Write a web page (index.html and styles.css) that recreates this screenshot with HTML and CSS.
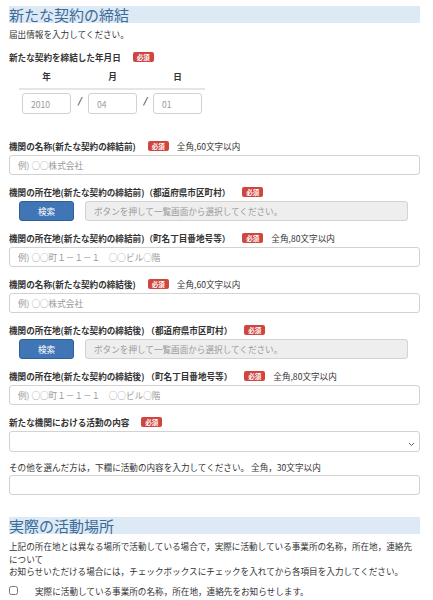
FILE: index.html
```html
<!DOCTYPE html>
<html lang="ja">
<head>
<meta charset="utf-8">
<title>新たな契約の締結</title>
<link rel="stylesheet" href="styles.css">
</head>
<body>
<div class="page">
  <h2 class="sec-title">新たな契約の締結</h2>
  <p class="lead">届出情報を入力してください。</p>

  <div class="field first">
    <div class="label-row"><span class="label">新たな契約を締結した年月日</span><span class="badge">必須</span></div>
    <div class="date">
      <div class="date-head"><span>年</span><span></span><span>月</span><span></span><span>日</span></div>
      <div class="date-inputs">
        <input class="input" type="text" placeholder="2010">
        <span class="slash">/</span>
        <input class="input" type="text" placeholder="04">
        <span class="slash">/</span>
        <input class="input" type="text" placeholder="01">
      </div>
    </div>
  </div>

  <div class="field after-date">
    <div class="label-row"><span class="label">機関の名称(新たな契約の締結前)</span><span class="badge">必須</span><span class="note">全角,60文字以内</span></div>
    <input class="input full" type="text" placeholder="例) ○○株式会社">
  </div>

  <div class="field">
    <div class="label-row"><span class="label">機関の所在地(新たな契約の締結前)（都道府県市区町村）</span><span class="badge">必須</span></div>
    <div class="search-row">
      <button class="btn-search" type="button">検索</button>
      <input class="input readonly" type="text" readonly placeholder="ボタンを押して一覧画面から選択してください。">
    </div>
  </div>

  <div class="field">
    <div class="label-row"><span class="label">機関の所在地(新たな契約の締結前)（町名丁目番地号等）</span><span class="badge">必須</span><span class="note">全角,80文字以内</span></div>
    <input class="input full" type="text" placeholder="例) ○○町１－１－１　○○ビル○階">
  </div>

  <div class="field">
    <div class="label-row"><span class="label">機関の名称(新たな契約の締結後)</span><span class="badge">必須</span><span class="note">全角,60文字以内</span></div>
    <input class="input full" type="text" placeholder="例) ○○株式会社">
  </div>

  <div class="field">
    <div class="label-row"><span class="label">機関の所在地(新たな契約の締結後) （都道府県市区町村）</span><span class="badge">必須</span></div>
    <div class="search-row">
      <button class="btn-search" type="button">検索</button>
      <input class="input readonly" type="text" readonly placeholder="ボタンを押して一覧画面から選択してください。">
    </div>
  </div>

  <div class="field">
    <div class="label-row"><span class="label">機関の所在地(新たな契約の締結後) （町名丁目番地号等）</span><span class="badge">必須</span><span class="note">全角,80文字以内</span></div>
    <input class="input full" type="text" placeholder="例) ○○町１－１－１　○○ビル○階">
  </div>

  <div class="field">
    <div class="label-row"><span class="label">新たな機関における活動の内容</span><span class="badge">必須</span></div>
    <div class="select-wrap">
      <select class="input full select"><option></option></select>
      <svg class="chev" width="7" height="5" viewBox="0 0 7 5"><path d="M1 1 L3.5 3.5 L6 1" fill="none" stroke="#666" stroke-width="1"/></svg>
    </div>
  </div>

  <div class="field other">
    <div class="label-row"><span class="plain">その他を選んだ方は，下欄に活動の内容を入力してください。 全角，30文字以内</span></div>
    <input class="input full" type="text">
  </div>

  <h2 class="sec-title second">実際の活動場所</h2>
  <p class="para">上記の所在地とは異なる場所で活動している場合で，実際に活動している事業所の名称，所在地，連絡先<br>について<br>お知らせいただける場合には，チェックボックスにチェックを入れてから各項目を入力してください。</p>
  <label class="check-row"><input type="checkbox" class="check"><span>実際に活動している事業所の名称，所在地，連絡先をお知らせします。</span></label>
</div>
</body>
</html>
```

FILE: styles.css
```css
* { box-sizing: border-box; }
html, body { margin: 0; padding: 0; background: #fff; }
body {
  font-family: "Noto Sans CJK JP", "Noto Sans", sans-serif;
  font-size: 8.6px;
  color: #333;
  line-height: 12px;
}
.page {
  margin-left: 9px;
  width: 411px;
  padding-top: 6px;
}
.sec-title {
  margin: 0;
  height: 17px;
  line-height: 17px;
  background: #dde9f5;
  color: #3b6c98;
  font-size: 15px;
  font-weight: normal;
  padding-left: 0;
  white-space: nowrap;
}
.lead {
  margin: 5px 0 0;
}
.field { margin-top: 11px; }
.field.after-date { margin-top: 26px; }
.field.other { margin-top: 9px; }
.field.other .full { margin-top: 2px; }
.label-row {
  display: flex;
  align-items: center;
  height: 12px;
  white-space: nowrap;
}
.label { font-weight: bold; }
.plain { font-weight: normal; }
.badge {
  margin-left: 12px;
  background: #d0463f;
  color: #fff;
  font-size: 6.5px;
  font-weight: bold;
  line-height: 10px;
  height: 10px;
  padding: 0 4px;
  border-radius: 2px;
}
.note { margin-left: 8px; }

.input {
  display: block;
  height: 20px;
  border: 1px solid #d2d2d2;
  border-radius: 3px;
  background: #fff;
  font-family: inherit;
  font-size: 8.6px;
  color: #555;
  padding: 0 8px;
  margin: 0;
  outline: none;
}
.input::placeholder { color: #9a9a9a; }
.full { width: 100%; margin-top: 3px; }

.date {
  margin-left: 10px;
  width: 186px;
  margin-top: 7px;
}
.date-head {
  display: grid;
  grid-template-columns: 49px 17px 49px 16px 49px;
  padding: 0 3px 6px;
  border-bottom: 2px solid #e6e6e6;
  font-weight: bold;
  text-align: center;
}
.date-inputs {
  display: grid;
  grid-template-columns: 49px 17px 49px 16px 49px;
  padding: 0 3px;
  margin-top: 3px;
}
.date-inputs .input { width: 49px; height: 21px; }
.slash {
  font-weight: bold;
  font-style: italic;
  text-align: center;
  line-height: 14px;
  color: #333;
}

.search-row {
  display: flex;
  gap: 11px;
  margin-top: 3px;
  padding-left: 10px;
  padding-right: 12px;
}
.btn-search {
  width: 55px;
  height: 20px;
  background: #4176b6;
  border: 1px solid #2f5f98;
  border-radius: 3px;
  color: #fff;
  font-family: inherit;
  font-size: 8.6px;
  padding: 0;
}
.readonly {
  flex: 1;
  background: #eeeeee;
}

.select-wrap { position: relative; }
.select {
  appearance: none;
  -webkit-appearance: none;
  height: 21px;
}
.chev {
  position: absolute;
  right: 5px;
  top: 11px;
}

.sec-title.second { margin-top: 22px; }
.para {
  margin: 6px 0 0;
  line-height: 12.5px;
}
.check-row {
  display: flex;
  align-items: center;
  margin-top: 7px;
}
.check {
  margin: 0;
  width: 9px;
  height: 9px;
}
.check-row span { margin-left: 17px; }
```
